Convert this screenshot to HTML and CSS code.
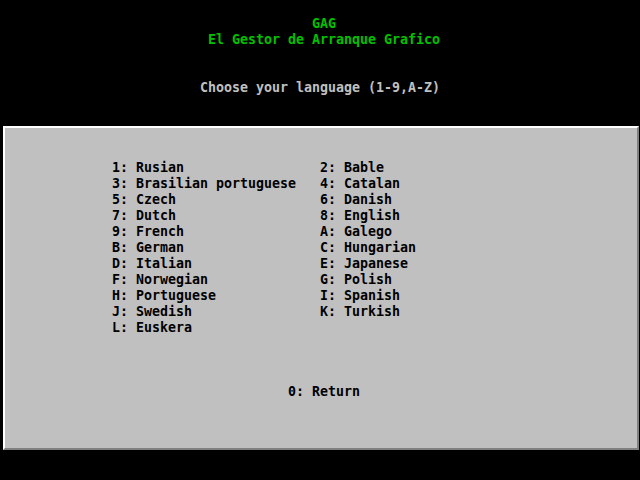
FILE: index.html
```html
<!DOCTYPE html>
<html>
<head>
<meta charset="utf-8">
<link rel="stylesheet" href="styles.css">
</head>
<body>
<div class="screen">
  <header class="top">
    <div class="line green ind-gag">GAG</div>
    <div class="line green ind-sub">El Gestor de Arranque Grafico</div>
    <div class="line gray ind-choose">Choose your language (1-9,A-Z)</div>
  </header>
  <main class="panel">
    <div class="langs">
      <div>1: Rusian</div><div>2: Bable</div>
      <div>3: Brasilian portuguese</div><div>4: Catalan</div>
      <div>5: Czech</div><div>6: Danish</div>
      <div>7: Dutch</div><div>8: English</div>
      <div>9: French</div><div>A: Galego</div>
      <div>B: German</div><div>C: Hungarian</div>
      <div>D: Italian</div><div>E: Japanese</div>
      <div>F: Norwegian</div><div>G: Polish</div>
      <div>H: Portuguese</div><div>I: Spanish</div>
      <div>J: Swedish</div><div>K: Turkish</div>
      <div>L: Euskera</div>
    </div>
    <div class="ret">0: Return</div>
  </main>
</div>
</body>
</html>
```
FILE: styles.css
```css
html, body {
  margin: 0;
  padding: 0;
  background: #000;
}
.screen {
  width: 640px;
  height: 480px;
  overflow: hidden;
  font-family: "DejaVu Sans Mono", "Liberation Mono", monospace;
  font-weight: bold;
  font-size: 13.29px;
  line-height: 16px;
}
.top {
  padding-top: 16px;
  height: 80px;
  display: flex;
  flex-direction: column;
}
.line {
  height: 16px;
  white-space: pre;
}
.green { color: #00c000; }
.gray { color: #c0c0c0; }
.ind-gag { padding-left: 312px; }
.ind-sub { padding-left: 208px; }
.ind-choose { padding-left: 200px; margin-top: 32px; }
.panel {
  margin: 30px 0 0 3px;
  width: 632px;
  height: 320px;
  background: #c0c0c0;
  border-style: solid;
  border-width: 2px;
  border-color: #ffffff #808080 #808080 #ffffff;
  color: #000;
}
.langs {
  padding: 32px 0 0 107px;
  display: grid;
  grid-template-columns: 208px 208px;
  grid-auto-rows: 16px;
  white-space: pre;
}
.ret {
  margin-top: 48px;
  padding-left: 283px;
  height: 16px;
  white-space: pre;
}
```
